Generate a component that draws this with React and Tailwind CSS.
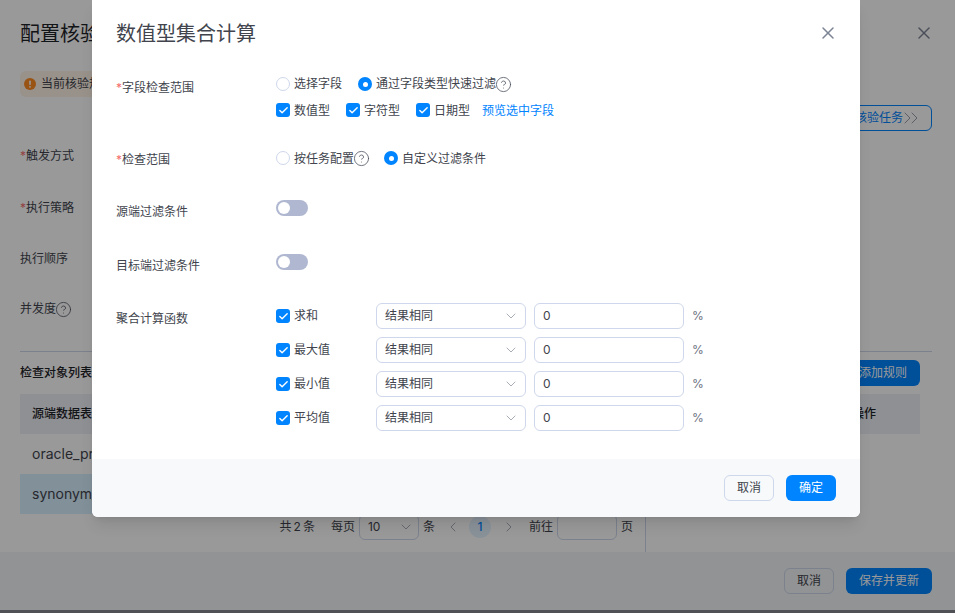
import React from 'react';
import { ChevronDown, ChevronLeft, ChevronRight, ChevronsRight, CircleHelp, Check, X } from 'lucide-react';

const fontStack = 'font-[Inter,"Noto_Sans_CJK_SC",sans-serif]';

const Radio = ({ checked }) =>
  checked ? (
    <span className="flex h-3.5 w-3.5 shrink-0 items-center justify-center rounded-full bg-[#0084ff]">
      <span className="h-[5px] w-[5px] rounded-full bg-white" />
    </span>
  ) : (
    <span className="h-3.5 w-3.5 shrink-0 rounded-full border border-[#ced7eb] bg-white" />
  );

const Box = () => (
  <span className="flex h-3.5 w-3.5 shrink-0 items-center justify-center rounded-[3px] bg-[#0084ff]">
    <Check size={11} strokeWidth={3} className="text-white" />
  </span>
);

const Help = () => <CircleHelp size={17} strokeWidth={1.1} className="-mx-px shrink-0 text-[#4a4f5c]" />;

const Switch = () => (
  <span className="flex h-4 w-8 items-center rounded-full bg-[#b0b8d1] pl-0.5">
    <span className="h-3 w-3 rounded-full bg-white" />
  </span>
);

const Label = ({ required, children, className = '' }) => (
  <div className={`w-40 shrink-0 text-xs leading-5 text-[#41444d] ${className}`}>
    {required && <span className="text-[#f56c6c]">*</span>}
    {children}
  </div>
);

const funcs = ['求和', '最大值', '最小值', '平均值'];

const FuncRow = ({ name }) => (
  <div className="flex h-[26px] items-center text-xs text-[#41444d]">
    <div className="flex w-[100px] items-center gap-1">
      <Box />
      <span>{name}</span>
    </div>
    <div className="flex h-[26px] w-[150px] items-center justify-between rounded-md border border-[#ced7eb] pl-2 pr-1.5">
      <span>结果相同</span>
      <ChevronDown size={16} strokeWidth={1} className="text-[#7d8494]" />
    </div>
    <div className="ml-2 flex h-[26px] w-[150px] items-center rounded-md border border-[#ced7eb] pl-2">0</div>
    <span className="ml-2 text-[#6b7080]">%</span>
  </div>
);

const Background = () => (
  <div className="flex h-[610px] flex-col bg-white text-[#1f2329]">
    <div className="flex items-center justify-between px-5 pt-5">
      <h2 className="text-xl leading-7">配置核验规则</h2>
      <X size={20} strokeWidth={1.8} className="-mt-0.5 mr-px text-[#7d8494]" />
    </div>
    <div className="ml-5 mt-[23px] flex h-[26px] w-[300px] items-center gap-[5px] rounded-md bg-[#fff3e6] px-1 text-xs text-[#41444d]">
      <svg width="12" height="12" viewBox="0 0 12 12" className="shrink-0">
        <circle cx="6" cy="6" r="6" fill="#ff8a1f" />
        <rect x="5.2" y="2.4" width="1.6" height="4.6" rx="0.8" fill="#fff" />
        <circle cx="6" cy="8.8" r="0.9" fill="#fff" />
      </svg>
      当前核验规则
    </div>
    <div className="mx-[23px] mt-2 flex justify-end">
      <div className="flex h-[26px] w-[200px] items-center justify-end rounded-md border border-[#0084ff] pr-2 text-xs text-[#0084ff]">
        开始核验任务
        <ChevronsRight size={24} strokeWidth={0.8} className="-ml-1 text-[#7d8494]" />
      </div>
    </div>
    <div className="px-5 text-xs text-[#41444d]">
      <div className="mt-[15px] leading-5"><span className="text-[#f56c6c]">*</span>触发方式</div>
      <div className="mt-8 leading-5"><span className="text-[#f56c6c]">*</span>执行策略</div>
      <div className="mt-[31px] leading-5">执行顺序</div>
      <div className="mt-[30px] flex items-center leading-5">并发度<Help /></div>
    </div>
    <div className="ml-5 mr-[23px] mt-8 border-t border-[#ced7eb]" />
    <div className="mr-[35px] mt-2 flex h-[26px] items-center justify-between pl-5">
      <span className="text-xs font-medium">检查对象列表</span>
      <span className="flex h-[26px] w-[120px] items-center justify-end rounded-md bg-[#0084ff] pr-[13px] text-xs text-white">添加规则</span>
    </div>
    <div className="ml-5 mr-[35px] mt-2 flex h-10 items-center justify-between bg-[#eef0f5] px-3 text-xs font-medium">
      <span>源端数据表</span>
      <span className="mr-[32px]">操作</span>
    </div>
    <div className="ml-5 flex h-10 w-[625px] items-center px-3 text-sm text-[#41444d]">oracle_product</div>
    <div className="ml-5 flex h-10 w-[625px] items-center bg-[#d9f0ff] px-3 text-sm text-[#41444d]">synonym_table</div>
    <div className="ml-5 flex h-[38px] w-[626px] justify-end border-r border-[#ced7eb] pr-3 text-xs text-[#41444d]">
      <div className="flex h-[26px] items-center">
        <span className="flex gap-0.5"><span>共</span><span>2</span><span>条</span></span>
        <span className="ml-4">每页</span>
        <span className="ml-1 flex h-[26px] w-[60px] items-center justify-between rounded-md border border-[#ced7eb] pl-2 pr-1">
          10
          <ChevronDown size={16} strokeWidth={1} className="text-[#7d8494]" />
        </span>
        <span className="ml-1">条</span>
        <ChevronLeft size={16} strokeWidth={1} className="ml-2.5 text-[#7d8494]" />
        <span className="ml-2 flex h-[22px] w-[22px] items-center justify-center rounded-full bg-[#e6f3ff] font-medium text-[#0084ff]">1</span>
        <ChevronRight size={16} strokeWidth={1} className="ml-2.5 text-[#7d8494]" />
        <span className="ml-3">前往</span>
        <span className="ml-1 h-[26px] w-[60px] rounded-md border border-[#ced7eb]" />
        <span className="ml-1">页</span>
      </div>
    </div>
    <div className="flex h-[58px] items-center justify-end gap-3 bg-[#f3f5f8] pr-[23px] text-xs">
      <span className="flex h-[26px] w-[50px] items-center justify-center rounded-md border border-[#ced7eb] text-[#41444d]">取消</span>
      <span className="flex h-[26px] w-[86px] items-center justify-center rounded-md bg-[#0084ff] text-white">保存并更新</span>
    </div>
  </div>
);

const App = () => (
  <div className={`relative h-[613px] w-[955px] overflow-hidden bg-[#84878f] ${fontStack}`}>
    <Background />
    <div className="absolute inset-0 bg-black/40" />

    <div className="absolute left-[92px] top-0 flex h-[517px] w-[768px] flex-col rounded-b-md bg-white shadow-lg">
      <div className="flex items-center justify-between px-6 pt-5">
        <h3 className="text-xl leading-7 text-[#41444d]">数值型集合计算</h3>
        <X size={20} strokeWidth={1.8} className="-mr-0.5 -mt-0.5 text-[#7d8494]" />
      </div>

      <div className="flex-1 px-6">
        <div className="mt-[26px] flex">
          <Label required className="pt-1">字段检查范围</Label>
          <div className="text-xs text-[#41444d]">
            <div className="flex h-5 items-center">
              <Radio />
              <span className="ml-1">选择字段</span>
              <span className="ml-4"><Radio checked /></span>
              <span className="ml-1">通过字段类型快速过滤</span>
              <Help />
            </div>
            <div className="mt-1.5 flex h-5 items-center">
              <Box />
              <span className="ml-1 pt-0.5">数值型</span>
              <span className="ml-4"><Box /></span>
              <span className="ml-1 pt-0.5">字符型</span>
              <span className="ml-4"><Box /></span>
              <span className="ml-1 pt-0.5">日期型</span>
              <span className="ml-3 pt-0.5 text-[#0084ff]">预览选中字段</span>
            </div>
          </div>
        </div>

        <div className="mt-7 flex h-5">
          <Label required className="pt-0.5">检查范围</Label>
          <div className="flex h-5 items-center text-xs text-[#41444d]">
            <Radio />
            <span className="ml-1 pt-0.5">按任务配置</span>
            <Help />
            <span className="ml-[15px]"><Radio checked /></span>
            <span className="ml-1 pt-0.5">自定义过滤条件</span>
          </div>
        </div>

        <div className="mt-8 flex h-4">
          <Label className="pt-0.5">源端过滤条件</Label>
          <Switch />
        </div>

        <div className="mt-[38px] flex h-4">
          <Label className="pt-0.5">目标端过滤条件</Label>
          <Switch />
        </div>

        <div className="mt-[33px] flex">
          <Label className="pt-1.5">聚合计算函数</Label>
          <div className="flex flex-col gap-2">
            {funcs.map((f) => <FuncRow key={f} name={f} />)}
          </div>
        </div>
      </div>

      <div className="flex h-[58px] items-center justify-end gap-3 rounded-b-md bg-[#f8f9fb] pr-6 text-xs">
        <button className="flex h-[26px] w-[50px] items-center justify-center rounded-md border border-[#ced7eb] text-[#41444d]">取消</button>
        <button className="flex h-[26px] w-[50px] items-center justify-center rounded-md bg-[#0084ff] text-white">确定</button>
      </div>
    </div>
  </div>
);

export default App;
